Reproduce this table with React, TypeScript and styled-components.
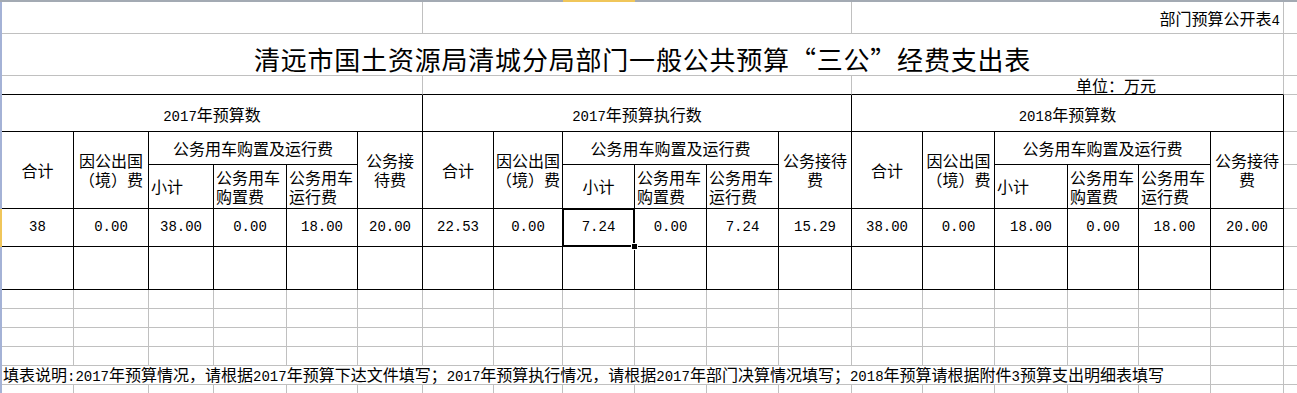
import React from 'react';
import styled, { createGlobalStyle } from 'styled-components';

const GRID = '#c0c0c0';
const INK = '#000';

// column widths in px, each one includes its right gridline
const COLS = [72, 75, 65, 73, 71, 65, 71, 69, 72, 72, 72, 73, 71, 72, 73, 71, 72, 73];
// first track is the edge of the column headers, the rest are sheet rows
const ROWS = [2, 32, 42, 19, 37, 33, 44, 38, 43, 19, 19, 19, 19, 19, 19];

type Align = 'left' | 'center' | 'right';
type VAlign = 'start' | 'center' | 'end';

const flexOf = (a?: Align) => (a === 'left' ? 'flex-start' : a === 'right' ? 'flex-end' : 'center');
const vflexOf = (v?: VAlign) => (v === 'start' ? 'flex-start' : v === 'end' ? 'flex-end' : 'center');

const GlobalStyle = createGlobalStyle`
	html, body {
		margin: 0;
		padding: 0;
		background: #fff;
		overflow: hidden;
	}

	body {
		font-family: "Noto Sans CJK SC", "Liberation Sans", sans-serif;
		color: #000;
	}
`;

const Sheet = styled.div`
	display: grid;
	grid-template-columns: 2px ${COLS.map(c => `${c}px`).join(' ')} 1fr;
	grid-template-rows: ${ROWS.map(r => `${r}px`).join(' ')};
	width: 1297px;
	height: 393px;
	overflow: hidden;
	background: #fff;
`;

const ColumnEdge = styled.div<{ $span: number; $active?: boolean }>`
	grid-column: span ${props => props.$span};
	background: ${props => (props.$active ? '#f0c65a' : '#a3aab3')};
`;

const RowEdge = styled.div<{ $rows: number; $active?: boolean }>`
	grid-row: span ${props => props.$rows};
	background: ${props => (props.$active ? '#f0c65a' : '#a4b2d6')};
`;

interface CellProps {
	$c?: number;
	$r?: number;
	$align?: Align;
	$v?: VAlign;
}

const SheetCell = styled.div<CellProps>`
	grid-column: span ${props => props.$c ?? 1};
	grid-row: span ${props => props.$r ?? 1};
	box-sizing: border-box;
	border-right: 1px solid ${GRID};
	border-bottom: 1px solid ${GRID};
	display: flex;
	flex-direction: column;
	align-items: ${props => flexOf(props.$align)};
	justify-content: ${props => vflexOf(props.$v)};
	min-width: 0;
	font-size: 16px;
	line-height: 19px;
	white-space: nowrap;
	position: relative;
`;

const Trail = styled.div`
	border-bottom: 1px solid ${GRID};
`;

const SheetNo = styled(SheetCell)`
	padding: 0 3px 2px 0;
`;

const Title = styled(SheetCell)`
	font-size: 26px;
	line-height: 30px;
	letter-spacing: 0.8px;
	padding-bottom: 1px;
	font-feature-settings: "fwid" 1;
`;

const UnitRow = styled(SheetCell)`
	border-bottom-color: ${INK};
	padding-right: 127px;
`;

const TableCell = styled(SheetCell)`
	border-right-color: ${INK};
	border-bottom-color: ${INK};
`;

const GroupHead = styled(TableCell)`
	padding-top: 6px;
`;

const HeadCell = styled(TableCell)`
	padding: 0 2px;
`;

const SubHead = styled(HeadCell)`
	line-height: 19px;
`;

const DataCell = styled(TableCell)`
	font-family: "Liberation Mono", "DejaVu Sans Mono", monospace;
	font-size: 14px;
`;

const SelectedCell = styled(DataCell)`
	z-index: 1;

	&::after {
		content: '';
		position: absolute;
		left: -1px;
		top: -1px;
		right: -1px;
		bottom: -1px;
		border: 2px solid #000;
		pointer-events: none;
	}
`;

const FillHandle = styled.span`
	position: absolute;
	right: -4px;
	bottom: -4px;
	width: 5px;
	height: 5px;
	background: #000;
	border: 1px solid #fff;
	z-index: 2;
`;

const Note = styled(SheetCell)`
	padding-left: 1px;
	line-height: 18px;
`;

const Line = styled.span`
	display: block;
`;

const Half = styled.span`
	font-family: "Liberation Mono", "DejaVu Sans Mono", monospace;
	font-size: 14px;
`;

// ASCII runs get a half-width monospace face, as in the sheet's Song font
const mixed = (text: string) =>
	text.split(/([\x20-\x7e]+)/).filter(Boolean).map((part, i) =>
		/^[\x20-\x7e]+$/.test(part) ? <Half key={i}>{part}</Half> : <React.Fragment key={i}>{part}</React.Fragment>
	);

interface Group {
	title: string;
	reception: [string, string];
	subtotal: Align;
	values: string[];
	selected?: number;
}

const groups: Group[] = [
	{
		title: '2017年预算数',
		reception: ['公务接', '待费'],
		subtotal: 'left',
		values: ['38', '0.00', '38.00', '0.00', '18.00', '20.00'],
	},
	{
		title: '2017年预算执行数',
		reception: ['公务接待', '费'],
		subtotal: 'center',
		values: ['22.53', '0.00', '7.24', '0.00', '7.24', '15.29'],
		selected: 2,
	},
	{
		title: '2018年预算数',
		reception: ['公务接待', '费'],
		subtotal: 'left',
		values: ['38.00', '0.00', '18.00', '0.00', '18.00', '20.00'],
	},
];

const NOTE =
	'填表说明:2017年预算情况，请根据2017年预算下达文件填写；2017年预算执行情况，请根据2017年部门决算情况填写；2018年预算请根据附件3预算支出明细表填写';

const blankRow = (key: string) => (
	<React.Fragment key={key}>
		{COLS.map((_, i) => (
			<SheetCell key={i} />
		))}
		<Trail />
	</React.Fragment>
);

const App = () => (
	<>
		<GlobalStyle />
		<Sheet>
			<ColumnEdge $span={9} />
			<ColumnEdge $span={1} $active />
			<ColumnEdge $span={10} />

			<RowEdge $rows={6} />
			<SheetCell $c={6} />
			<SheetCell $c={6} />
			<SheetNo $c={6} $align='right' $v='end'>
				<Line>{mixed('部门预算公开表4')}</Line>
			</SheetNo>
			<Trail />

			<Title $c={18} $v='end'>
				<Line>清远市国土资源局清城分局部门一般公共预算“三公”经费支出表</Line>
			</Title>
			<Trail />

			<UnitRow $c={6} />
			<UnitRow $c={6} />
			<UnitRow $c={6} $align='right'>
				<Line>单位：万元</Line>
			</UnitRow>
			<Trail />

			{groups.map(g => (
				<GroupHead key={g.title} $c={6}>
					<Line>{mixed(g.title)}</Line>
				</GroupHead>
			))}
			<Trail />

			{groups.map(g => (
				<React.Fragment key={g.title}>
					<HeadCell $r={2}>合计</HeadCell>
					<HeadCell $r={2}>
						<Line>因公出国</Line>
						<Line>（境）费</Line>
					</HeadCell>
					<HeadCell $c={3}>公务用车购置及运行费</HeadCell>
					<HeadCell $r={2}>
						<Line>{g.reception[0]}</Line>
						<Line>{g.reception[1]}</Line>
					</HeadCell>
				</React.Fragment>
			))}
			<Trail />

			{groups.map(g => (
				<React.Fragment key={g.title}>
					<HeadCell $align={g.subtotal}>小计</HeadCell>
					<SubHead $align='left'>
						<Line>公务用车</Line>
						<Line>购置费</Line>
					</SubHead>
					<SubHead $align='left'>
						<Line>公务用车</Line>
						<Line>运行费</Line>
					</SubHead>
				</React.Fragment>
			))}
			<Trail />

			<RowEdge $rows={1} $active />
			{groups.map(g =>
				g.values.map((v, i) =>
					i === g.selected ? (
						<SelectedCell key={`${g.title}-${i}`}>
							{v}
							<FillHandle />
						</SelectedCell>
					) : (
						<DataCell key={`${g.title}-${i}`}>{v}</DataCell>
					)
				)
			)}
			<Trail />

			<RowEdge $rows={7} />
			{COLS.map((_, i) => (
				<TableCell key={i} />
			))}
			<Trail />

			{['r9', 'r10', 'r11', 'r12'].map(blankRow)}

			<Note $c={17} $align='left'>
				<Line>{mixed(NOTE)}</Line>
			</Note>
			<SheetCell />
			<Trail />

			{blankRow('r14')}
		</Sheet>
	</>
);

export default App;
